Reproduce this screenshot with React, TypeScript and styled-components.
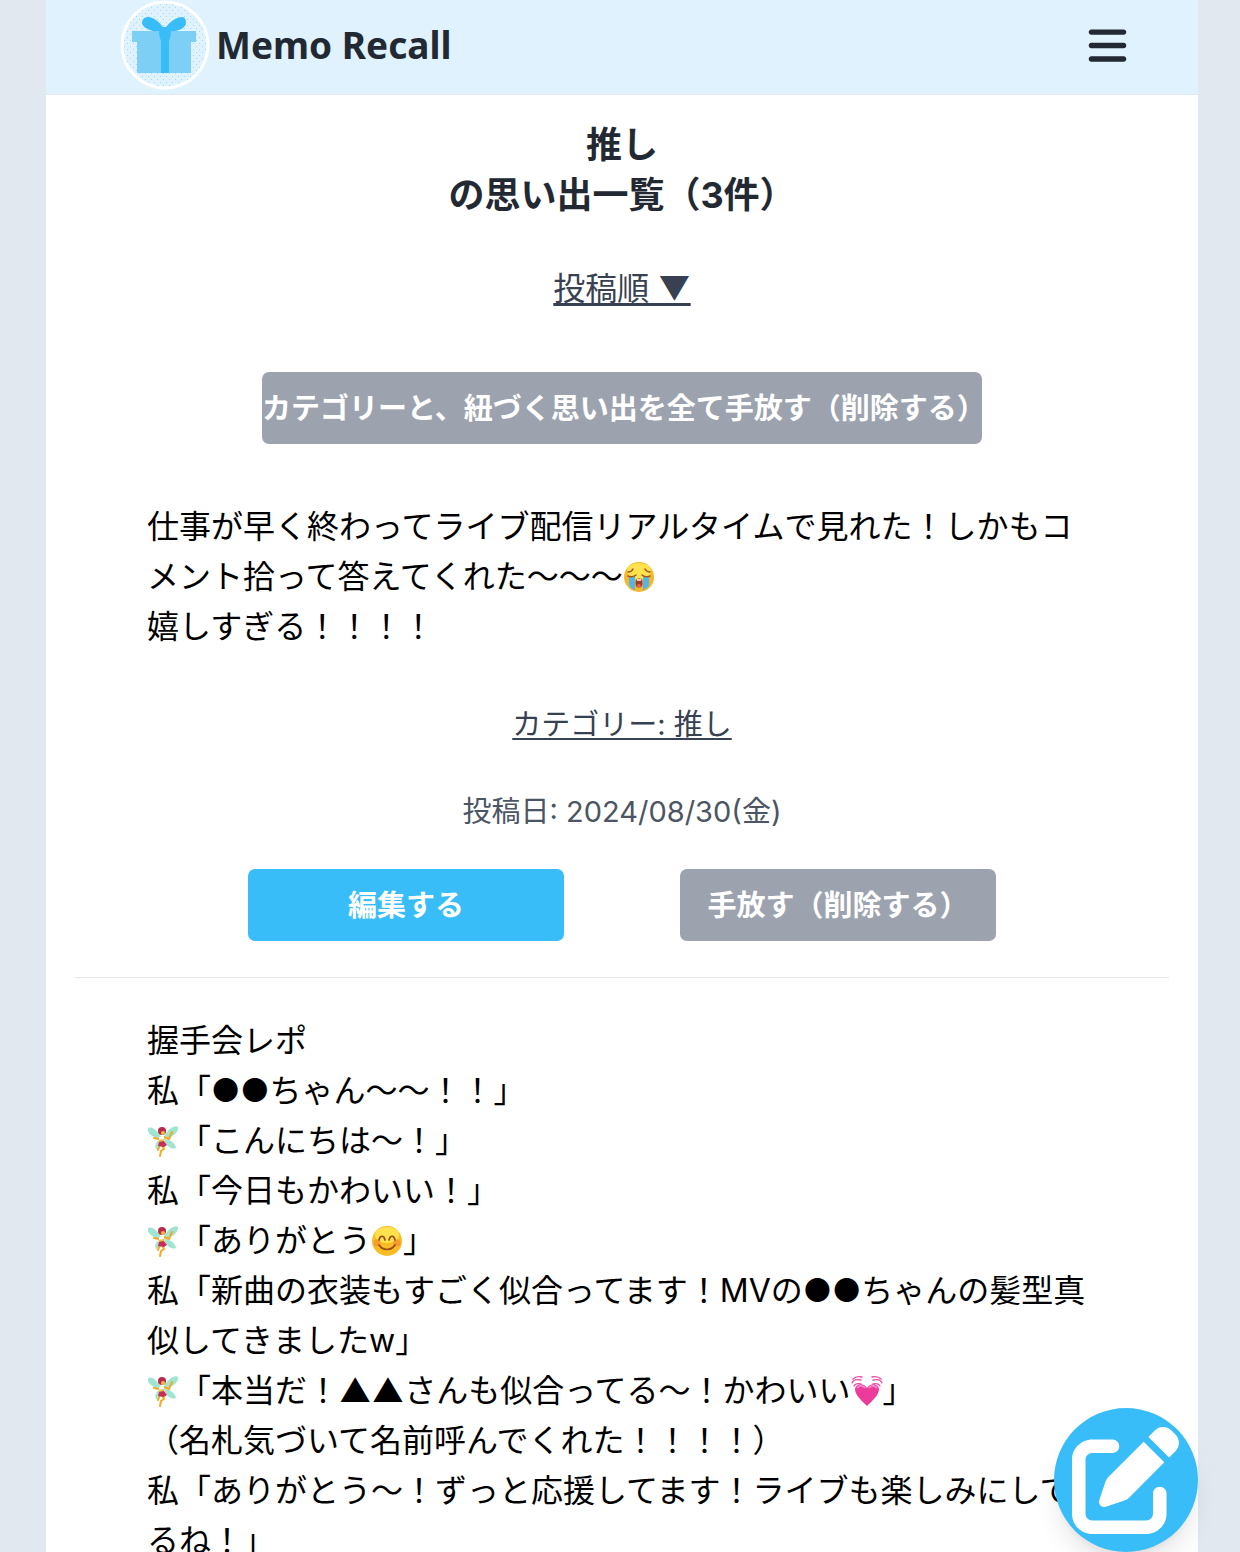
import React from "react";
import styled, { createGlobalStyle, css } from "styled-components";
import { FaBars, FaPenToSquare } from "react-icons/fa6";

const GlobalStyle = createGlobalStyle`
  *, *::before, *::after { box-sizing: border-box; }
  body {
    margin: 0;
    background: #e2e8f0;
    color: #000;
    font-family: Inter, "Noto Sans CJK JP", sans-serif;
    font-size: 32px;
    line-height: 50px;
  }
  h1, p { margin: 0; }
  a { color: inherit; }
  button { font: inherit; border: 0; padding: 0; cursor: pointer; }
`;

const Shell = styled.div`
  height: 100vh;
  padding: 0 42px 0 46px;
`;

const Column = styled.div`
  height: 100%;
  overflow-y: auto;
  scrollbar-width: none;
  background: #fff;
`;

const Header = styled.header`
  display: flex;
  align-items: center;
  justify-content: space-between;
  height: 95px;
  padding: 0 69px 4px 74px;
  background: #e0f2fe;
  border-bottom: 1px solid #e2e8f0;
`;

const Brand = styled.a`
  display: flex;
  align-items: center;
  gap: 6px;
  color: #222933;
  font-family: "Noto Sans", sans-serif;
  font-size: 37px;
  font-weight: 700;
  text-decoration: none;
`;

const MenuButton = styled.button`
  display: flex;
  background: none;
  color: #222933;
  font-size: 43px;
`;

const Main = styled.main`
  padding: 25px 29px 0;
`;

const Title = styled.h1`
  color: #222933;
  font-size: 36px;
  font-weight: 700;
  text-align: center;
`;

const Centered = styled.div<{ $top: number }>`
  display: flex;
  justify-content: center;
  margin-top: ${({ $top }) => $top}px;
`;

const linkText = css`
  color: #374151;
  text-decoration: underline;
  text-decoration-thickness: 3px;
  text-underline-offset: 3px;
`;

const SortButton = styled.button`
  ${linkText}
  background: none;
`;

const CategoryLink = styled.a`
  ${linkText}
  font-size: 29px;
  text-decoration-thickness: 2px;
`;

const PostDate = styled.time`
  color: #4b5563;
  font-size: 29px;
`;

const ActionButton = styled.button<{ $tone: "primary" | "muted"; $wide?: boolean }>`
  width: ${({ $wide }) => ($wide ? 720 : 316)}px;
  height: 72px;
  padding-top: 2px;
  border-radius: 7px;
  background: ${({ $tone }) => ($tone === "primary" ? "#38bdf8" : "#9ca3af")};
  color: #fff;
  font-size: 29px;
  font-weight: 700;
  text-align: ${({ $wide }) => ($wide ? "left" : "center")};
  white-space: nowrap;
`;

const PostList = styled.div`
  margin-top: 20px;
`;

const Post = styled.article`
  padding: 38px 0 36px;
  border-bottom: 1px solid #e5e7eb;
`;

const PostBody = styled.p`
  padding: 0 72px;
  white-space: pre-wrap;
`;

const Actions = styled.div`
  display: flex;
  justify-content: center;
  gap: 116px;
  margin-top: 32px;
`;

const ComposeButton = styled.button`
  position: fixed;
  right: 42px;
  bottom: 0;
  display: flex;
  align-items: center;
  justify-content: center;
  width: 144px;
  height: 144px;
  border-radius: 50%;
  background: #38bdf8;
  color: #fff;
  font-size: 108px;
  box-shadow: 0 18px 27px -5px rgb(0 0 0 / 0.1), 0 7px 11px -7px rgb(0 0 0 / 0.1);
`;

const EmojiSvg = styled.svg`
  width: 32px;
  height: 32px;
  vertical-align: -5px;
`;

const GiftLogo = () => (
  <svg width="90" height="90" viewBox="0 0 90 90" aria-hidden="true">
    <defs>
      <pattern id="dots" width="6" height="6" patternUnits="userSpaceOnUse">
        <rect width="6" height="6" fill="#e0f2fe" />
        <rect x="1" y="1" width="1" height="1" fill="#9bdcfa" />
        <rect x="4" y="4" width="1" height="1" fill="#9bdcfa" />
      </pattern>
    </defs>
    <circle cx="45" cy="45" r="43" fill="url(#dots)" stroke="#fff" strokeWidth="3" />
    <path d="M12 31h64v11h-5v31H17V42h-5z" fill="#7dcff6" />
    <path
      d="M37 31C31 32 22 27 22 23c0-4 3-6 6-6 6 0 12 6 15 10h3c3-4 10-10 16-10 3 0 4 3 4 6 0 5-9 9-15 8 0 4-1 7-2 10v32h-8V41c-1-3-2-6-2-10z"
      fill="#38bdf8"
    />
  </svg>
);

const CryingFace = () => (
  <EmojiSvg viewBox="0 0 32 32" role="img" aria-label="大泣き">
    <circle cx="16" cy="16" r="15" fill="#f8b62a" />
    <ellipse cx="16" cy="10" rx="12" ry="8" fill="#ffe24e" />
    <path d="M6 15h6v14c-3-1-5-3-6-5zM20 15h6v9c-1 2-3 4-6 5z" fill="#52b6ec" />
    <path d="M5 11c2 0 4-1 5-3M27 11c-2 0-4-1-5-3M5 15c2 1 6 1 8-1M27 15c-2 1-6 1-8-1" fill="none" stroke="#a3561b" strokeWidth="1.500" strokeLinecap="round" />
    <ellipse cx="16" cy="22" rx="3.500" ry="4.500" fill="#a33c22" />
    <path d="M14 19h4" stroke="#fff" strokeWidth="1.500" />
    <ellipse cx="16" cy="24.500" rx="2" ry="1.500" fill="#ef6253" />
  </EmojiSvg>
);

const SmilingFace = () => (
  <EmojiSvg viewBox="0 0 32 32" role="img" aria-label="笑顔">
    <circle cx="16" cy="16" r="15" fill="#f9bc25" />
    <ellipse cx="16" cy="10" rx="12" ry="8" fill="#ffe24e" />
    <circle cx="6" cy="18" r="3.500" fill="#f79a2d" />
    <circle cx="26" cy="18" r="3.500" fill="#f79a2d" />
    <path d="M8 15c1-5 5-5 6 0M18 15c1-5 5-5 6 0M8 20c4 6 12 6 16 0" fill="none" stroke="#9a4a12" strokeWidth="1.700" strokeLinecap="round" />
  </EmojiSvg>
);

const Fairy = () => (
  <EmojiSvg viewBox="0 0 32 32" role="img" aria-label="妖精">
    <path d="M15 14C11 5 3 0 1 4c-1 5 6 9 14 10zM16 14C19 5 28-1 31 2c1 5-5 11-15 12zM15 14c-5 1-8 6-6 10 4 0 6-4 6-10zM17 14c6 0 12 5 12 9-5 2-10-2-12-9z" fill="#9fe5cf" />
    <path d="M12 14l-5-1M17 12l5 2 3-7M15 20l2 4-3 2-1 5M13 20l-2 5" fill="none" stroke="#f5a824" strokeWidth="2" strokeLinecap="round" strokeLinejoin="round" />
    <circle cx="15" cy="6" r="4" fill="#b52b49" />
    <circle cx="16" cy="8" r="2" fill="#f7b83d" />
    <path d="M12 12l5-1v6h-5z" fill="#f7b83d" />
    <path d="M12 12l5-1v3l-5 1z" fill="#fff" />
    <path d="M12 17l5-1 3 4-3 2-6-1z" fill="#ca2d55" />
  </EmojiSvg>
);

const BeatingHeart = () => (
  <EmojiSvg viewBox="0 0 32 32" role="img" aria-label="ときめくハート">
    <path d="M16 31C10 25 4 20 4 14c1-6 9-6 12-1 3-5 11-5 12 1 0 6-6 11-12 17z" fill="#ed3b9c" />
    <path d="M6 13c2-3 6-3 8 0M18 13c2-3 6-3 8 0" fill="none" stroke="#fa85c5" strokeWidth="2" />
    <path d="M1 8c1-3 4-4 9-3M2 4c2-2 5-3 9-2M3 11c1-2 3-3 7-2M31 8c-1-3-4-4-9-3M30 4c-2-2-5-3-9-2M29 11c-1-2-3-3-7-2" fill="none" stroke="#ef4ca8" strokeWidth="1.300" strokeLinecap="round" />
  </EmojiSvg>
);

export default function App() {
  return (
    <>
      <GlobalStyle />
      <Shell>
        <Column>
          <Header>
            <Brand href="#top">
              <GiftLogo />
              Memo Recall
            </Brand>
            <MenuButton type="button" aria-label="メニュー">
              <FaBars />
            </MenuButton>
          </Header>
          <Main>
            <Title>
              推し
              <br />
              の思い出一覧（3件）
            </Title>
            <Centered $top={44}>
              <SortButton type="button">投稿順 ▼</SortButton>
            </Centered>
            <Centered $top={58}>
              <ActionButton type="button" $tone="muted" $wide>
                カテゴリーと、紐づく思い出を全て手放す（削除する）
              </ActionButton>
            </Centered>
            <PostList>
              <Post>
                <PostBody>
                  仕事が早く終わってライブ配信リアルタイムで見れた！しかもコメント拾って答えてくれた〜〜〜
                  <CryingFace />
                  {"\n"}嬉しすぎる！！！！
                </PostBody>
                <Centered $top={48}>
                  <CategoryLink href="#category">カテゴリー: 推し</CategoryLink>
                </Centered>
                <Centered $top={37}>
                  <PostDate dateTime="2024-08-30">投稿日: 2024/08/30(金)</PostDate>
                </Centered>
                <Actions>
                  <ActionButton type="button" $tone="primary">編集する</ActionButton>
                  <ActionButton type="button" $tone="muted">手放す（削除する）</ActionButton>
                </Actions>
              </Post>
              <Post>
                <PostBody>
                  握手会レポ{"\n"}
                  私「●●ちゃん〜〜！！」{"\n"}
                  <Fairy />「こんにちは〜！」{"\n"}
                  私「今日もかわいい！」{"\n"}
                  <Fairy />「ありがとう<SmilingFace />」{"\n"}
                  私「新曲の衣装もすごく似合ってます！MVの●●ちゃんの髪型真似してきましたw」{"\n"}
                  <Fairy />「本当だ！▲▲さんも似合ってる〜！かわいい<BeatingHeart />」{"\n"}
                  （名札気づいて名前呼んでくれた！！！！）{"\n"}
                  私「ありがとう〜！ずっと応援してます！ライブも楽しみにしてるね！」
                </PostBody>
              </Post>
            </PostList>
          </Main>
        </Column>
        <ComposeButton type="button" aria-label="思い出を投稿する">
          <FaPenToSquare />
        </ComposeButton>
      </Shell>
    </>
  );
}
